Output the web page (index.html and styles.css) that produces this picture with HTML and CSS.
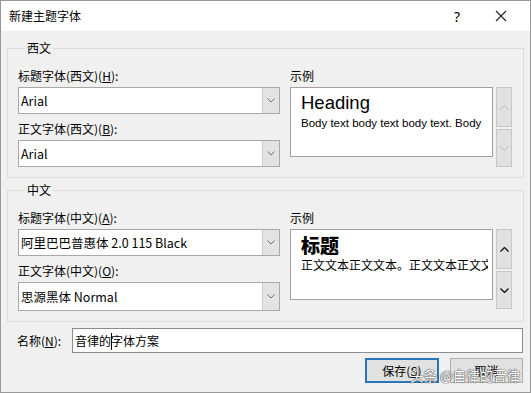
FILE: index.html
```html
<!DOCTYPE html>
<html lang="zh-CN">
<head>
    <meta charset="UTF-8">
    <title>新建主题字体</title>
    <link rel="stylesheet" href="styles.css">
</head>
<body>

<div class="window">
    <div class="titlebar">
        <span class="title">新建主题字体</span>
        <span class="help">?</span>
        <span class="close">
            <svg width="12" height="12" viewBox="0 0 12 12"><path d="M1 1 L11 11 M11 1 L1 11" stroke="#222" stroke-width="1.1" fill="none"/></svg>
        </span>
    </div>

    <fieldset class="group">
        <legend>西文</legend>
        <div class="group-body">
            <div class="fields">
                <div class="label">标题字体(西文)(<u>H</u>):</div>
                <div class="combo">
                    <span class="combo-text">Arial</span>
                    <span class="drop"><svg width="8" height="5" viewBox="0 0 8 5"><path d="M0.5 0.5 L4 4 L7.5 0.5" stroke="#707070" fill="none"/></svg></span>
                </div>
                <div class="label second">正文字体(西文)(<u>B</u>):</div>
                <div class="combo">
                    <span class="combo-text">Arial</span>
                    <span class="drop"><svg width="8" height="5" viewBox="0 0 8 5"><path d="M0.5 0.5 L4 4 L7.5 0.5" stroke="#707070" fill="none"/></svg></span>
                </div>
            </div>
            <div class="sample">
                <div class="label">示例</div>
                <div class="sample-row">
                    <div class="preview latin">
                        <div class="pv-head">Heading</div>
                        <div class="pv-body">Body text body text body text. Body</div>
                    </div>
                    <div class="spin">
                        <div class="spin-btn up"><svg width="9" height="5" viewBox="0 0 9 5"><path d="M0.5 4.5 L4.5 0.5 L8.5 4.5" stroke="#b8b8b8" fill="none"/></svg></div>
                        <div class="spin-btn down"><svg width="9" height="5" viewBox="0 0 9 5"><path d="M0.5 0.5 L4.5 4.5 L8.5 0.5" stroke="#b8b8b8" fill="none"/></svg></div>
                    </div>
                </div>
            </div>
        </div>
    </fieldset>

    <fieldset class="group cjk">
        <legend>中文</legend>
        <div class="group-body">
            <div class="fields">
                <div class="label">标题字体(中文)(<u>A</u>):</div>
                <div class="combo">
                    <span class="combo-text">阿里巴巴普惠体 2.0 115 Black</span>
                    <span class="drop"><svg width="8" height="5" viewBox="0 0 8 5"><path d="M0.5 0.5 L4 4 L7.5 0.5" stroke="#707070" fill="none"/></svg></span>
                </div>
                <div class="label second">正文字体(中文)(<u>O</u>):</div>
                <div class="combo tall">
                    <span class="combo-text">思源黑体 Normal</span>
                    <span class="drop"><svg width="8" height="5" viewBox="0 0 8 5"><path d="M0.5 0.5 L4 4 L7.5 0.5" stroke="#707070" fill="none"/></svg></span>
                </div>
            </div>
            <div class="sample">
                <div class="label">示例</div>
                <div class="sample-row">
                    <div class="preview han">
                        <div class="pv-head">标题</div>
                        <div class="pv-body">正文文本正文文本。正文文本正文文本。</div>
                    </div>
                    <div class="spin">
                        <div class="spin-btn up"><svg width="9" height="5" viewBox="0 0 9 5"><path d="M0.5 4.5 L4.5 0.5 L8.5 4.5" stroke="#111" stroke-width="1.3" fill="none"/></svg></div>
                        <div class="spin-btn down"><svg width="9" height="5" viewBox="0 0 9 5"><path d="M0.5 0.5 L4.5 4.5 L8.5 0.5" stroke="#111" stroke-width="1.3" fill="none"/></svg></div>
                    </div>
                </div>
            </div>
        </div>
    </fieldset>

    <div class="name-row">
        <span class="name-label">名称(<u>N</u>):</span>
        <div class="name-input">音律的<span class="caret"></span>字体方案</div>
    </div>

    <div class="buttons">
        <div class="btn default">保存(<u>S</u>)</div>
        <div class="btn">取消</div>
    </div>

    <div class="watermark">头条 @自律的音律</div>
</div>

</body>
</html>
```

FILE: styles.css
```css
body {
    margin: 0;
    padding: 0;
    font-family: "Noto Sans CJK SC", "Noto Sans", sans-serif;
    font-size: 12px;
    color: #000;
    background-color: #f0f0f0;
}
.window {
    position: relative;
    width: 531px;
    height: 393px;
    box-sizing: border-box;
    border: 1px solid #999;
    background-color: #f0f0f0;
    overflow: hidden;
}
.titlebar {
    height: 30px;
    background-color: #fff;
    display: flex;
    align-items: center;
}
.title {
    margin-left: 8px;
    font-size: 12px;
    line-height: 16px;
}
.help {
    margin-left: auto;
    width: 14px;
    text-align: center;
    font-size: 14px;
    font-family: "Noto Sans", sans-serif;
}
.close {
    width: 12px;
    height: 12px;
    margin-left: 31px;
    margin-right: 23px;
    display: flex;
}
.group {
    margin: 9px 6px 0 6px;
    padding: 11px 11px 10px 10px;
    border: 1px solid #dcdcdc;
    min-width: 0;
}
.group.cjk {
    margin-top: 4px;
}
legend {
    padding: 0 2px;
    margin-left: 7px;
    line-height: 16px;
}
.group-body {
    display: flex;
    gap: 10px;
}
.fields {
    width: 262px;
}
.label {
    line-height: 18px;
    margin-bottom: 2px;
}
.label.second {
    margin-top: 6px;
}
.combo {
    height: 27px;
    box-sizing: border-box;
    border: 1px solid #a8a8a8;
    background-color: #fff;
    display: flex;
    align-items: center;
}
.combo.tall {
    height: 29px;
}
.combo-text {
    flex: 1;
    padding-left: 2px;
    font-size: 12.5px;
    white-space: nowrap;
}
.drop {
    width: 17px;
    height: 100%;
    box-sizing: border-box;
    border-left: 1px solid #cccccc;
    background-color: #e3e3e3;
    display: flex;
    align-items: center;
    justify-content: center;
}
.sample {
    width: 222px;
}
.sample-row {
    display: flex;
    gap: 3px;
}
.preview {
    width: 203px;
    height: 70px;
    box-sizing: border-box;
    border: 1px solid #a0a0a0;
    background-color: #fff;
    padding: 5px 0 0 10px;
    overflow: hidden;
    white-space: nowrap;
}
.preview.han {
    height: 71px;
    padding-top: 4px;
}
.latin .pv-head {
    font-family: "Liberation Sans", Arial, sans-serif;
    font-size: 18.5px;
    line-height: 20px;
}
.latin .pv-body {
    font-family: "Liberation Sans", Arial, sans-serif;
    font-size: 11.5px;
    line-height: 15px;
    margin-top: 3px;
}
.han .pv-head {
    font-size: 19px;
    font-weight: 900;
    line-height: 22px;
}
.han .pv-body {
    font-size: 12px;
    line-height: 14px;
    margin-top: 2px;
    width: 187px;
    overflow: hidden;
}
.spin {
    width: 16px;
    display: flex;
    flex-direction: column;
    gap: 2px;
}
.spin-btn {
    box-sizing: border-box;
    border: 1px solid #c6c6c6;
    background-color: #e1e1e1;
    display: flex;
    align-items: center;
    justify-content: center;
}
.spin-btn.up {
    height: 40px;
}
.spin-btn.down {
    height: 38px;
}
.name-row {
    display: flex;
    align-items: center;
    margin: 6px 7px 0 16px;
}
.name-label {
    width: 55px;
    line-height: 16px;
}
.name-input {
    flex: 1;
    height: 25px;
    box-sizing: border-box;
    border: 1px solid #8c8c8c;
    background-color: #fff;
    padding-left: 2px;
    font-size: 12px;
    line-height: 23px;
}
.caret {
    display: inline-block;
    width: 1px;
    height: 17px;
    background-color: #000;
    vertical-align: -4px;
    margin-right: -1px;
}
.buttons {
    display: flex;
    justify-content: flex-end;
    gap: 11px;
    margin: 5px 7px 0 0;
}
.btn {
    width: 73px;
    height: 25px;
    box-sizing: border-box;
    border: 1px solid #adadad;
    background-color: #e1e1e1;
    display: flex;
    align-items: center;
    justify-content: center;
    font-size: 12px;
}
.btn.default {
    width: 74px;
    border: 2px solid #2a76b8;
}
.watermark {
    position: absolute;
    left: 409px;
    top: 364px;
    font-size: 13.5px;
    line-height: 20px;
    color: #fff;
    white-space: nowrap;
    text-shadow: 0 0 1px #444, 0 0 1px #444, 0 0 1px #555;
}
```
